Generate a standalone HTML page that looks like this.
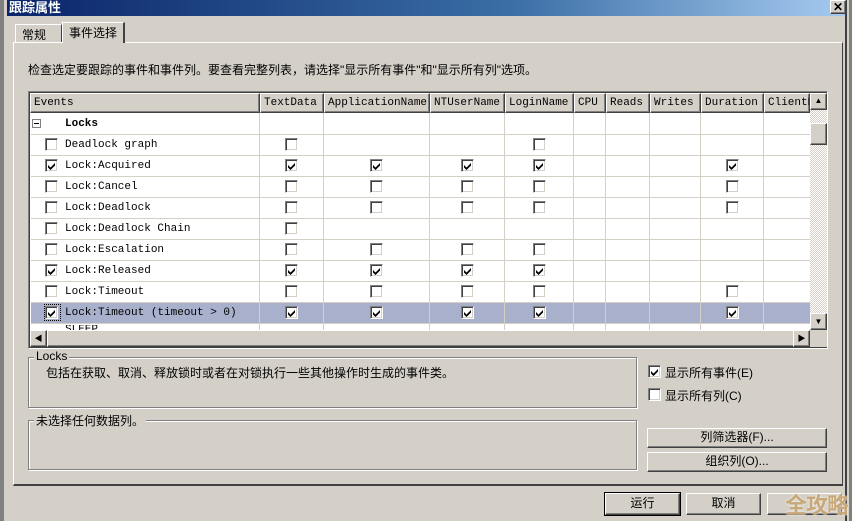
<!DOCTYPE html>
<html><head><meta charset="utf-8">
<style>
*{margin:0;padding:0;box-sizing:border-box}
body{width:852px;height:521px;background:#d4d0c8;position:relative;overflow:hidden;font-family:"Liberation Sans","Noto Sans CJK SC","WenQuanYi Zen Hei",sans-serif;font-size:12px;color:#000}
.a{position:absolute}
.mono{font-family:"Liberation Mono","Noto Sans CJK SC",monospace;font-size:11px}
.cb{position:absolute;width:13px;height:13px;background:#fff;border-top:1px solid #808080;border-left:1px solid #808080;border-right:1px solid #fff;border-bottom:1px solid #fff;box-shadow:inset 1px 1px 0 #404040,inset -1px -1px 0 #d4d0c8}
.cb svg{position:absolute;left:2px;top:2px}
.hd{position:absolute;top:93px;height:20px;background:#d4d0c8;border-top:1px solid #fff;border-left:1px solid #fff;border-right:1px solid #404040;border-bottom:1px solid #404040;box-shadow:inset -1px -1px 0 #808080;padding:3px 3px 0;white-space:nowrap;overflow:hidden}
.vl{position:absolute;top:113px;height:217px;width:1px;background:#d4d0c8}
.hl{position:absolute;left:31px;width:779px;height:1px;background:#d4d0c8}
.btn{position:absolute;background:#d4d0c8;border-top:1px solid #fff;border-left:1px solid #fff;border-right:1px solid #404040;border-bottom:1px solid #404040;box-shadow:inset -1px -1px 0 #808080;text-align:center;line-height:17px}
.grp{position:absolute;border:1px solid #808080;box-shadow:1px 1px 0 #fff, inset 1px 1px 0 #fff}
.lbl{position:absolute;background:#d4d0c8;padding:0 2px}
.rt .a{margin-top:2px}
</style></head><body>
<div class="a" style="left:0;top:0;width:4px;height:521px;background:#808080"></div>
<div class="a" style="left:4px;top:0;width:3px;height:521px;background:#d4d0c8"></div>
<div class="a" style="left:845px;top:0;width:2px;height:521px;background:#404040"></div>
<div class="a" style="left:849px;top:0;width:3px;height:521px;background:#808080"></div>
<div class="a" style="left:7px;top:0;width:838px;height:16px;background:linear-gradient(90deg,#0a246a,#3a6ea5 60%,#a6caf0);color:#fff;font-weight:bold;font-size:13px;line-height:15px;padding-left:2px">跟踪属性</div>
<div class="btn" style="left:830px;top:0;width:16px;height:14px;line-height:12px;font-weight:bold;font-size:12px">✕</div>

<div class="a" style="left:15px;top:24px;width:47px;height:19px;border-top:1px solid #fff;border-left:1px solid #fff;border-right:1px solid #404040;padding:1px 6px">常规</div>
<div class="a" style="left:62px;top:22px;width:63px;height:21px;background:#d4d0c8;border-top:1px solid #fff;border-left:1px solid #fff;border-right:2px solid #404040;padding:1px 6px;z-index:2">事件选择</div>
<div class="a" style="left:13px;top:42px;width:830px;height:444px;border-top:1px solid #fff;border-left:1px solid #fff;border-right:1px solid #404040;border-bottom:2px solid #404040"></div>

<div class="a" style="left:28px;top:61px">检查选定要跟踪的事件和事件列。要查看完整列表，请选择"显示所有事件"和"显示所有列"选项。</div>

<div class="a" style="left:28px;top:91px;width:800px;height:258px;border-top:1px solid #808080;border-left:1px solid #808080;border-right:1px solid #fff;border-bottom:1px solid #fff;background:#404040"></div>
<div class="a" style="left:30px;top:93px;width:780px;height:237px;background:#fff"></div>
<div class="a" style="left:31px;top:302px;width:779px;height:21px;background:#a8b0cc"></div>
<div class="mono">
<div class="hd" style="left:30px;width:230px">Events</div>
<div class="hd" style="left:260px;width:64px">TextData</div>
<div class="hd" style="left:324px;width:106px">ApplicationName</div>
<div class="hd" style="left:430px;width:75px">NTUserName</div>
<div class="hd" style="left:505px;width:69px">LoginName</div>
<div class="hd" style="left:574px;width:32px">CPU</div>
<div class="hd" style="left:606px;width:44px">Reads</div>
<div class="hd" style="left:650px;width:51px">Writes</div>
<div class="hd" style="left:701px;width:63px">Duration</div>
<div class="hd" style="left:764px;width:46px">ClientP</div>
</div>
<div class="vl" style="left:259px"></div><div class="vl" style="left:323px"></div><div class="vl" style="left:429px"></div><div class="vl" style="left:504px"></div><div class="vl" style="left:573px"></div><div class="vl" style="left:605px"></div><div class="vl" style="left:649px"></div><div class="vl" style="left:700px"></div><div class="vl" style="left:763px"></div>
<div class="hl" style="top:134px"></div><div class="hl" style="top:155px"></div><div class="hl" style="top:176px"></div><div class="hl" style="top:197px"></div><div class="hl" style="top:218px"></div><div class="hl" style="top:239px"></div><div class="hl" style="top:260px"></div><div class="hl" style="top:281px"></div><div class="hl" style="top:302px"></div><div class="hl" style="top:323px"></div>

<div class="a" style="left:32px;top:119px;width:9px;height:9px;border:1px solid #808080;background:#fff"><div class="a" style="left:1px;top:3px;width:5px;height:1px;background:#000"></div></div>
<div class="mono rt">
<div class="a" style="left:65px;top:116px;font-weight:bold">Locks</div>
<div class="a" style="left:65px;top:137px">Deadlock graph</div>
<div class="a" style="left:65px;top:158px">Lock:Acquired</div>
<div class="a" style="left:65px;top:179px">Lock:Cancel</div>
<div class="a" style="left:65px;top:200px">Lock:Deadlock</div>
<div class="a" style="left:65px;top:221px">Lock:Deadlock Chain</div>
<div class="a" style="left:65px;top:242px">Lock:Escalation</div>
<div class="a" style="left:65px;top:263px">Lock:Released</div>
<div class="a" style="left:65px;top:284px">Lock:Timeout</div>
<div class="a" style="left:65px;top:305px">Lock:Timeout (timeout &gt; 0)</div>
</div>
<div class="a mono" style="left:65px;top:325px;height:5px;overflow:hidden;line-height:10px">SLEEP</div>
<div class="a" style="left:44px;top:304px;width:17px;height:17px;border:1px dotted #000"></div>

<svg width="0" height="0" style="position:absolute"><defs><path id="ck" d="M0 3 L2.5 5.5 L7 1 L7 3.5 L2.5 8 L0 5.5 Z" fill="#000"/></defs></svg>
<div class="cb" style="left:45px;top:138px"></div><div class="cb" style="left:285px;top:138px"></div><div class="cb" style="left:533px;top:138px"></div>
<div class="cb" style="left:45px;top:159px"><svg width="8" height="8"><use href="#ck"/></svg></div><div class="cb" style="left:285px;top:159px"><svg width="8" height="8"><use href="#ck"/></svg></div><div class="cb" style="left:370px;top:159px"><svg width="8" height="8"><use href="#ck"/></svg></div><div class="cb" style="left:461px;top:159px"><svg width="8" height="8"><use href="#ck"/></svg></div><div class="cb" style="left:533px;top:159px"><svg width="8" height="8"><use href="#ck"/></svg></div><div class="cb" style="left:726px;top:159px"><svg width="8" height="8"><use href="#ck"/></svg></div>
<div class="cb" style="left:45px;top:180px"></div><div class="cb" style="left:285px;top:180px"></div><div class="cb" style="left:370px;top:180px"></div><div class="cb" style="left:461px;top:180px"></div><div class="cb" style="left:533px;top:180px"></div><div class="cb" style="left:726px;top:180px"></div>
<div class="cb" style="left:45px;top:201px"></div><div class="cb" style="left:285px;top:201px"></div><div class="cb" style="left:370px;top:201px"></div><div class="cb" style="left:461px;top:201px"></div><div class="cb" style="left:533px;top:201px"></div><div class="cb" style="left:726px;top:201px"></div>
<div class="cb" style="left:45px;top:222px"></div><div class="cb" style="left:285px;top:222px"></div>
<div class="cb" style="left:45px;top:243px"></div><div class="cb" style="left:285px;top:243px"></div><div class="cb" style="left:370px;top:243px"></div><div class="cb" style="left:461px;top:243px"></div><div class="cb" style="left:533px;top:243px"></div>
<div class="cb" style="left:45px;top:264px"><svg width="8" height="8"><use href="#ck"/></svg></div><div class="cb" style="left:285px;top:264px"><svg width="8" height="8"><use href="#ck"/></svg></div><div class="cb" style="left:370px;top:264px"><svg width="8" height="8"><use href="#ck"/></svg></div><div class="cb" style="left:461px;top:264px"><svg width="8" height="8"><use href="#ck"/></svg></div><div class="cb" style="left:533px;top:264px"><svg width="8" height="8"><use href="#ck"/></svg></div>
<div class="cb" style="left:45px;top:285px"></div><div class="cb" style="left:285px;top:285px"></div><div class="cb" style="left:370px;top:285px"></div><div class="cb" style="left:461px;top:285px"></div><div class="cb" style="left:533px;top:285px"></div><div class="cb" style="left:726px;top:285px"></div>
<div class="cb" style="left:45px;top:306px"><svg width="8" height="8"><use href="#ck"/></svg></div><div class="cb" style="left:285px;top:306px"><svg width="8" height="8"><use href="#ck"/></svg></div><div class="cb" style="left:370px;top:306px"><svg width="8" height="8"><use href="#ck"/></svg></div><div class="cb" style="left:461px;top:306px"><svg width="8" height="8"><use href="#ck"/></svg></div><div class="cb" style="left:533px;top:306px"><svg width="8" height="8"><use href="#ck"/></svg></div><div class="cb" style="left:726px;top:306px"><svg width="8" height="8"><use href="#ck"/></svg></div>

<div class="a" style="left:810px;top:93px;width:17px;height:237px;background:repeating-conic-gradient(#fff 0 25%,#d4d0c8 0 50%) 0 0/2px 2px"></div>
<div class="btn" style="left:810px;top:93px;width:17px;height:17px;font-size:8px;line-height:14px">▲</div>
<div class="btn" style="left:810px;top:123px;width:17px;height:22px"></div>
<div class="btn" style="left:810px;top:313px;width:17px;height:17px;font-size:8px;line-height:15px">▼</div>
<div class="a" style="left:30px;top:330px;width:780px;height:17px;background:repeating-conic-gradient(#fff 0 25%,#d4d0c8 0 50%) 0 0/2px 2px"></div>
<div class="btn" style="left:30px;top:330px;width:17px;height:17px;font-size:8px;line-height:15px">◀</div>
<div class="btn" style="left:47px;top:330px;width:748px;height:17px"></div>
<div class="btn" style="left:793px;top:330px;width:17px;height:17px;font-size:8px;line-height:15px">▶</div>
<div class="a" style="left:810px;top:330px;width:17px;height:17px;background:#d4d0c8"></div>

<div class="grp" style="left:28px;top:357px;width:609px;height:51px"></div>
<div class="lbl" style="left:34px;top:349px">Locks</div>
<div class="a" style="left:46px;top:364px">包括在获取、取消、释放锁时或者在对锁执行一些其他操作时生成的事件类。</div>
<div class="grp" style="left:28px;top:420px;width:609px;height:50px"></div>
<div class="lbl" style="left:34px;top:412px">未选择任何数据列。</div>

<div class="cb" style="left:648px;top:365px"><svg width="8" height="8"><use href="#ck"/></svg></div>
<div class="a" style="left:665px;top:364px">显示所有事件(E)</div>
<div class="cb" style="left:648px;top:388px"></div>
<div class="a" style="left:665px;top:387px">显示所有列(C)</div>
<div class="btn" style="left:647px;top:428px;width:180px;height:20px">列筛选器(F)...</div>
<div class="btn" style="left:647px;top:452px;width:180px;height:20px">组织列(O)...</div>

<div class="btn" style="left:605px;top:493px;width:75px;height:22px;outline:1px solid #000;line-height:19px">运行</div>
<div class="btn" style="left:686px;top:493px;width:75px;height:22px;line-height:19px">取消</div>
<div class="btn" style="left:767px;top:493px;width:75px;height:22px"></div>
<div class="a" style="left:785px;top:488px;font-size:22px;font-weight:bold;color:#c8a878;letter-spacing:-1px;text-shadow:0 0 2px #fff">全攻略</div>
</body></html>
